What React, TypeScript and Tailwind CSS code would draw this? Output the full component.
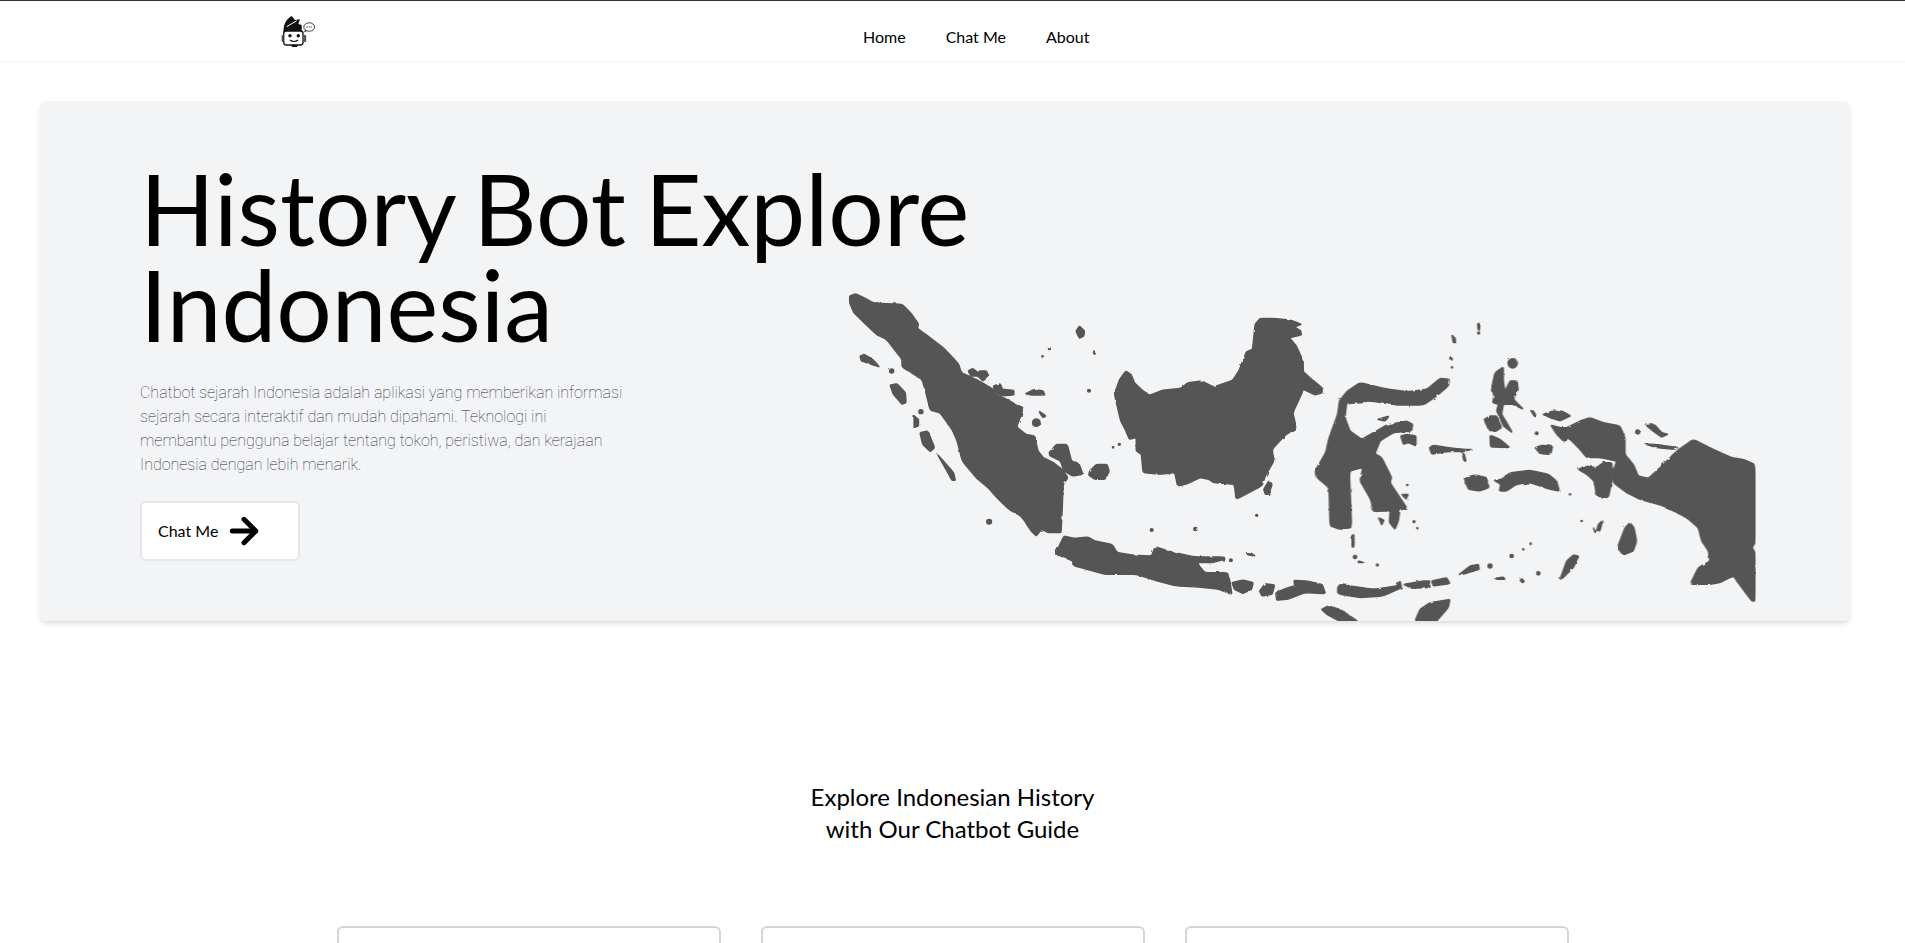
import { ArrowRight } from 'lucide-react';

const sumatraSide = [
  'M28,45 L45,38 L70,50 L95,65 L130,68 L180,70 L205,95 L228,128 L225,142 L262,170 L300,200 L328,230 L345,250 L352,275 L375,285 L405,300 L445,325 L450,340 L485,355 L510,370 L532,380 L525,405 L513,438 L540,460 L565,465 L575,510 L590,530 L620,545 L645,565 L662,590 L648,610 L645,690 L642,755 L620,755 L605,755 L585,745 L570,765 L555,750 L525,705 L490,685 L455,650 L430,620 L395,590 L355,540 L340,480 L325,445 L290,395 L262,388 L248,330 L238,295 L180,258 L180,235 L135,175 L105,160 L70,125 L40,95 L28,65 Z',
  'M58,225 L70,220 L95,235 L115,258 L90,250 L62,240 Z',
  'M145,312 L165,308 L190,335 L192,365 L180,370 L155,340 Z',
  'M215,405 L228,415 L228,435 L215,440 Z',
  'M232,455 L255,450 L275,500 L262,512 L240,490 Z',
  'M283,520 L300,540 L330,575 L335,598 L325,598 L305,560 Z',
  'M372,270 L385,262 L400,275 L405,270 L425,270 L432,285 L415,300 L400,285 L380,285 Z',
  'M445,315 L465,308 L472,325 L505,328 L505,342 L470,345 L450,335 Z',
  'M538,338 L565,325 L590,330 L595,342 L555,342 Z',
  'M575,388 L598,405 L590,410 Z',
  'M607,515 L628,490 L660,490 L672,540 L695,550 L705,580 L675,585 L650,570 L640,540 L610,525 Z',
  'M725,570 L745,550 L775,550 L782,570 L770,595 L740,595 L722,582 Z',
  'M685,150 L695,135 L710,150 L708,165 L695,172 Z',
  // kalimantan
  'M800,330 L812,295 L830,270 L845,280 L855,305 L880,330 L900,342 L935,328 L990,322 L1010,305 L1050,300 L1085,318 L1140,298 L1158,270 L1170,238 L1180,212 L1198,205 L1205,130 L1220,112 L1260,112 L1310,118 L1340,130 L1320,138 L1338,150 L1340,162 L1305,170 L1325,195 L1345,240 L1345,272 L1370,295 L1400,320 L1400,335 L1380,342 L1345,325 L1340,340 L1315,395 L1325,440 L1290,465 L1255,505 L1260,540 L1235,585 L1225,615 L1150,655 L1145,610 L1085,605 L1070,595 L1045,590 L1010,608 L980,615 L972,575 L930,580 L880,575 L875,520 L860,510 L860,470 L840,475 L828,445 L815,420 L798,345 Z',
  'M1230,625 L1245,600 L1255,610 L1245,640 L1235,640 Z',
  // java and nusa tenggara
  'M625,820 L650,765 L680,772 L720,768 L740,780 L790,790 L805,815 L850,822 L905,825 L915,797 L960,812 L1030,828 L1115,828 L1118,835 L1080,845 L1035,845 L1060,875 L1125,875 L1132,900 L1138,940 L1100,925 L1040,918 L975,915 L920,900 L860,880 L800,880 L770,880 L680,855 L675,840 L640,825 Z',
  'M1138,905 L1170,897 L1200,905 L1195,925 L1170,938 L1145,925 Z',
  'M1218,930 L1235,908 L1262,912 L1255,940 L1225,945 Z',
  'M1265,935 L1300,920 L1320,915 L1318,898 L1355,900 L1400,910 L1410,938 L1350,935 L1300,955 L1268,958 Z',
  'M1180,815 L1195,817 L1205,825 L1185,822 Z',
];

const sumatraDots: [number, number, number][] = [
  [150, 270, 6], [235, 392, 6], [433, 722, 7], [570, 425, 11], [608, 203, 3], [588, 226, 2],
  [739, 216, 3], [723, 329, 4], [793, 499, 2], [811, 490, 3], [1135, 838, 4], [1032, 744, 5],
  [905, 747, 4], [1210, 703, 3],
];

const papuaSide = [
  // sulawesi
  'M-72,505 L-43,455 L-33,410 L-7,340 L-2,300 L22,270 L30,265 L60,245 L130,262 L200,272 L260,265 L300,232 L328,235 L325,255 L290,285 L250,312 L170,312 L90,300 L20,305 L15,350 L30,390 L65,415 L100,395 L140,372 L200,360 L218,370 L215,390 L160,395 L120,420 L105,458 L125,470 L155,530 L150,545 L180,590 L200,620 L180,628 L100,632 L92,595 L60,540 L68,500 L28,510 L35,680 L0,685 L-30,675 L-33,560 L-69,530 Z',
  'M335,102 L345,110 L347,125 L340,125 Z',
  'M413,68 L420,68 L418,88 L414,88 Z',
  // maluku
  'M455,260 L465,215 L490,198 L490,240 L495,270 L510,240 L530,240 L535,265 L520,295 L550,325 L520,310 L490,310 L485,340 L500,365 L517,395 L490,375 L480,350 L470,330 L475,310 L458,305 L462,285 Z',
  'M432,355 L450,345 L470,345 L485,380 L465,392 L445,385 Z',
  'M450,405 L458,405 L480,415 L510,440 L452,438 Z',
  'M268,440 L280,433 L340,442 L375,445 L395,445 L370,452 L320,452 L275,460 Z',
  'M366,455 L373,460 L378,480 L372,480 Z',
  'M112,355 L148,345 L135,360 Z',
  'M182,405 L200,400 L228,405 L228,435 L205,425 L190,430 Z',
  'M150,630 L165,620 L180,625 L175,660 L165,685 L148,665 Z',
  'M116,650 L132,658 L125,672 Z',
  'M185,580 L205,580 L198,595 Z',
  'M372,530 L405,522 L440,530 L447,560 L420,570 L385,565 Z',
  'M462,538 L485,535 L510,515 L570,508 L625,520 L650,540 L658,570 L630,565 L570,545 L530,550 L500,570 L478,570 L482,550 Z',
  'M585,440 L605,433 L638,436 L632,460 L600,458 Z',
  'M572,328 L582,332 L590,348 L582,345 Z',
  'M608,340 L640,330 L675,335 L692,345 L660,360 L630,350 Z',
  // papua
  'M632,372 L660,380 L680,380 L720,360 L750,350 L790,365 L840,375 L855,410 L855,460 L880,490 L895,525 L925,532 L960,500 L1010,450 L1060,415 L1120,445 L1175,470 L1210,475 L1245,490 L1245,725 L1237,740 L1245,755 L1245,900 L1235,900 L1205,860 L1180,825 L1140,845 L1110,850 L1050,850 L1075,800 L1110,780 L1105,750 L1085,720 L1075,680 L1040,650 L970,615 L900,595 L860,575 L820,545 L820,510 L830,480 L780,470 L740,470 L715,440 L690,415 L670,420 L650,400 Z',
  'M715,505 L735,495 L770,500 L790,485 L815,485 L820,520 L805,590 L770,585 L762,540 L740,520 Z',
  'M918,373 L945,372 L965,395 L985,400 L965,408 L945,395 Z',
  'M912,428 L960,432 L1015,440 L1000,445 L950,440 Z',
  'M855,680 L870,665 L882,680 L890,720 L880,750 L850,762 L832,740 Z',
  'M760,680 L768,695 L775,670 L788,658 L780,690 L765,695 Z',
  'M660,835 L680,780 L700,762 L716,765 L700,800 L670,830 Z',
  'M358,820 L390,795 L415,790 L418,805 L385,815 L362,822 Z',
  'M465,832 L490,828 L495,835 L470,835 Z',
  'M225,960 L240,925 L270,905 L330,895 L325,920 L290,960 Z',
  'M-7,860 L0,850 L100,865 L170,855 L180,840 L185,860 L130,885 L60,890 L0,880 L-7,875 Z',
  'M190,850 L250,840 L270,840 L265,860 L215,862 Z',
  'M275,840 L320,830 L330,848 L280,855 Z',
  'M-56,925 L-35,915 L0,925 L55,962 L0,962 L-40,940 Z',
  'M36,702 L42,702 L42,738 L36,738 Z',
  'M55,780 L72,785 L55,785 Z',
];

const papuaDots: [number, number, number][] = [
  [416, 96, 3], [334, 174, 3], [336, 199, 2], [518, 187, 14], [893, 393, 6], [450, 795, 6],
  [515, 765, 5], [595, 817, 5], [545, 838, 4], [45, 768, 5], [112, 792, 3], [590, 397, 4],
  [222, 662, 3], [232, 682, 2], [202, 552, 2], [572, 728, 2], [550, 745, 2], [725, 660, 2], [690, 580, 2],
];

// rounds the corners of a traced outline so coasts don't look like polygons
const soften = (d: string) => {
  const pts = d.replace(/[MLZ]/g, ' ').trim().split(/\s+/).map((p) => p.split(',').map(Number));
  const cut = 0.15;
  const parts = pts.map((p, i) => {
    const prev = pts[(i - 1 + pts.length) % pts.length];
    const next = pts[(i + 1) % pts.length];
    const ax = p[0] + (prev[0] - p[0]) * cut;
    const ay = p[1] + (prev[1] - p[1]) * cut;
    const bx = p[0] + (next[0] - p[0]) * cut;
    const by = p[1] + (next[1] - p[1]) * cut;
    return `${i === 0 ? 'M' : 'L'}${ax},${ay} Q${p[0]},${p[1]} ${bx},${by}`;
  });
  return `${parts.join(' ')} Z`;
};

const IndonesiaMap = () => (
  <svg viewBox="848 290 908 330" className="w-[908px] h-[330px] self-end shrink-0" fill="#555555" stroke="#555555" strokeWidth="4" strokeLinejoin="round">
    <defs>
      {/* a little noise makes the coastlines rough instead of clean curves */}
      <filter id="coast" x="848" y="290" width="908" height="330" filterUnits="userSpaceOnUse">
        <feTurbulence type="fractalNoise" baseFrequency="0.15" numOctaves="2" seed="4" />
        <feDisplacementMap in="SourceGraphic" scale="2.5" />
      </filter>
    </defs>
    <g filter="url(#coast)">
      <g transform="translate(840 280) scale(0.3444 0.3333)">
        {sumatraSide.map((d) => <path key={d} d={soften(d)} />)}
        {sumatraDots.map(([x, y, r]) => <circle key={`${x}-${y}`} cx={x} cy={y} r={r} />)}
      </g>
      <g transform="translate(1340 300) scale(0.3333)">
        {papuaSide.map((d) => <path key={d} d={soften(d)} />)}
        {papuaDots.map(([x, y, r]) => <circle key={`${x}-${y}`} cx={x} cy={y} r={r} />)}
      </g>
    </g>
  </svg>
);

const Logo = () => (
  <svg viewBox="280 12 36 36" className="w-9 h-9" aria-label="Logo">
    {/* hair */}
    <path d="M283.5 32 C283.5 25 285 20 291.7 16 L295 20 L300 19.3 L298.3 24 L301.7 25 L301.7 32 Z" fill="#111" />
    <path d="M286.7 26.7 L296.7 20.7" stroke="#fff" strokeWidth="1" fill="none" />
    {/* head */}
    <rect x="283.7" y="31" width="19.3" height="14" rx="2.5" fill="#fff" stroke="#111" strokeWidth="1.3" />
    <rect x="281.6" y="35" width="2" height="7" rx="1" fill="#555" />
    <rect x="303.2" y="35" width="3" height="7" rx="1" fill="#555" />
    <circle cx="290" cy="35.7" r="1.7" fill="#111" />
    <circle cx="298.3" cy="35.7" r="1.7" fill="#111" />
    <path d="M290 40 Q294 43 298 40" stroke="#111" strokeWidth="1.2" fill="none" />
    <rect x="291.7" y="45" width="5.6" height="2" fill="#111" />
    {/* speech bubble */}
    <ellipse cx="309.2" cy="27" rx="5.4" ry="4.2" fill="#fff" stroke="#444" strokeWidth="1" />
    <path d="M305.5 29.5 L303.5 32.5 L307.5 31 Z" fill="#444" />
    <path d="M306.7 27 H311.7" stroke="#222" strokeWidth="1" strokeDasharray="1 1" />
  </svg>
);

const App = () => {
  return (
    <div className="h-[943px] overflow-hidden bg-white border-t border-[#333333] font-['Lato',sans-serif] text-black">
      <nav className="h-[61px] border-b border-gray-100 flex items-start pl-[280px]">
        <div className="mt-[11px] w-9">
          <Logo />
        </div>
        <ul className="flex items-center gap-10 ml-[547px] mt-[24px] text-base leading-6">
          <li>Home</li>
          <li>Chat Me</li>
          <li>About</li>
        </ul>
      </nav>

      <section className="ml-10 mr-[55px] mt-[39px] h-[520px] rounded-md bg-gray-100 shadow-md flex overflow-hidden">
        <div className="w-[808px] shrink-0 pl-[100px] pt-[59px] flex flex-col items-start">
          <h1 className="w-[860px] shrink-0 text-[98px] leading-[96px] font-normal [word-spacing:-6px]">History Bot Explore Indonesia</h1>
          <p className="mt-[29px] w-[484px] font-['Roboto',sans-serif] font-thin text-base leading-6 text-gray-800">
            Chatbot sejarah Indonesia adalah aplikasi yang memberikan informasi sejarah secara interaktif dan mudah dipahami. Teknologi ini membantu pengguna belajar tentang tokoh, peristiwa, dan kerajaan Indonesia dengan lebih menarik.
          </p>
          <button className="mt-[24px] w-40 h-[60px] pl-4 flex items-center gap-[6px] bg-white border-2 border-gray-200 rounded-md text-base">
            Chat Me
            <ArrowRight size={40} strokeWidth={3} />
          </button>
        </div>
        <IndonesiaMap />
      </section>

      <h2 className="mt-[160px] text-center text-2xl leading-8">
        Explore Indonesian History
        <br />
        with Our Chatbot Guide
      </h2>

      <div className="mt-[81px] flex justify-center gap-10">
        <div className="w-96 h-52 border-2 border-gray-300 rounded-md" />
        <div className="w-96 h-52 border-2 border-gray-300 rounded-md" />
        <div className="w-96 h-52 border-2 border-gray-300 rounded-md" />
      </div>
    </div>
  );
};

export default App;
